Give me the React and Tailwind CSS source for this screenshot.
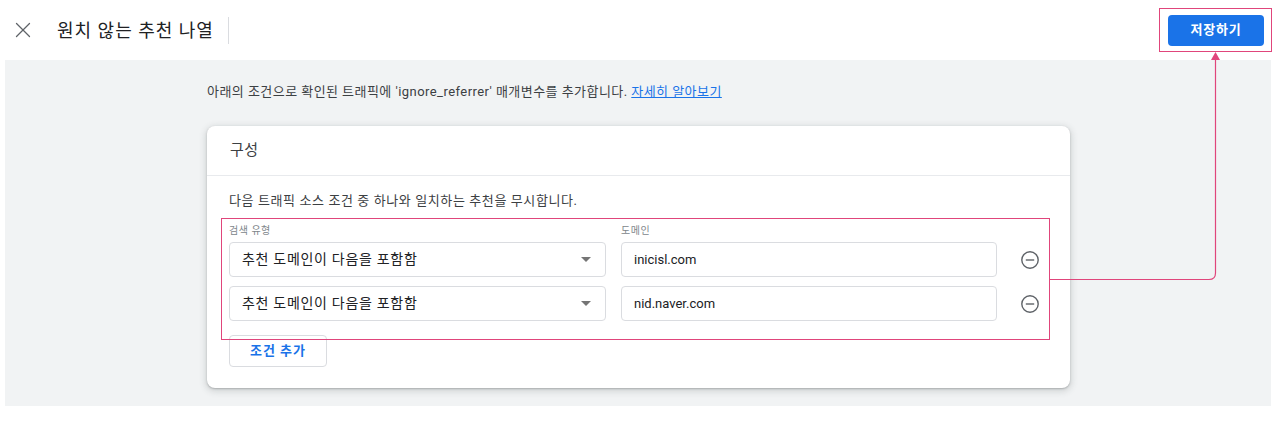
import { X } from 'lucide-react'

const font = { fontFamily: 'Roboto, "Noto Sans CJK KR", sans-serif' }

function SelectBox({ value }) {
  return (
    <div className="flex h-[35px] w-[377px] items-center justify-between rounded-[4px] border border-[#dadce0] bg-white pl-[12px] pr-[14px]">
      <span className="text-[14px] tracking-[0.7px] text-[#202124]">{value}</span>
      <span className="h-0 w-0 border-x-[5px] border-t-[5px] border-x-transparent border-t-[#757575]" />
    </div>
  )
}

function MinusCircle() {
  return (
    <svg width="20" height="20" viewBox="0 0 20 20" className="text-[#5f6368]">
      <circle cx="10" cy="10" r="8.2" fill="none" stroke="currentColor" strokeWidth="1.4" />
      <line x1="5.8" y1="10" x2="14.2" y2="10" stroke="currentColor" strokeWidth="1.4" />
    </svg>
  )
}

function ConditionRow({ domain }) {
  return (
    <div className="flex items-center">
      <SelectBox value="추천 도메인이 다음을 포함함" />
      <div className="ml-[15px] flex h-[35px] w-[376px] items-center rounded-[4px] border border-[#dadce0] bg-white px-[12px]">
        <span className="text-[13px] text-[#202124]">{domain}</span>
      </div>
      <button className="ml-[23px] flex h-[20px] w-[20px] items-center justify-center">
        <MinusCircle />
      </button>
    </div>
  )
}

export default function App() {
  return (
    <div className="relative h-[422px] w-[1280px] overflow-hidden bg-white" style={font}>
      {/* top bar */}
      <div className="flex h-[60px] items-center">
        <X className="ml-[10px] h-[26px] w-[26px] text-[#5f6368]" strokeWidth={1.2} />
        <h1 className="ml-[21px] text-[18px] tracking-[1px] text-[#202124]">원치 않는 추천 나열</h1>
        <div className="ml-[14px] h-[27px] w-px bg-[#dadce0]" />
        <div className="flex-1" />
        <button className="mr-[16px] flex h-[31px] w-[96px] items-center justify-center rounded-[4px] bg-[#1a73e8] text-[13px] font-bold tracking-[0.8px] text-white">
          저장하기
        </button>
      </div>

      {/* content area */}
      <div className="ml-[5px] mr-[9px] h-[346px] bg-[#f1f3f4] pl-[202px] pt-[22px]">
        <p className="text-[13px] leading-[20px] tracking-[0.45px] text-[#3c4043]">
          아래의 조건으로 확인된 트래픽에 'ignore_referrer' 매개변수를 추가합니다.{' '}
          <a className="text-[#1a73e8] underline">자세히 알아보기</a>
        </p>

        <div className="mt-[24px] w-[863px] rounded-[8px] bg-white shadow-[0_1px_2px_rgba(60,64,67,0.3),0_2px_6px_2px_rgba(60,64,67,0.15)]">
          <div className="flex h-[50px] items-center border-b border-[#e8eaed] px-[23px]">
            <h2 className="text-[15px] tracking-[0.5px] text-[#3c4043]">구성</h2>
          </div>
          <div className="px-[22px] pb-[21px] pt-[15px]">
            <p className="text-[13px] leading-[20px] tracking-[0.6px] text-[#3c4043]">
              다음 트래픽 소스 조건 중 하나와 일치하는 추천을 무시합니다.
            </p>
            <div className="mt-[12px] flex h-[14px] items-center text-[10px] tracking-[0.5px] text-[#80868b]">
              <span className="w-[392px]">검색 유형</span>
              <span>도메인</span>
            </div>
            <div className="mt-[5px] flex flex-col gap-[9px]">
              <ConditionRow domain="inicisl.com" />
              <ConditionRow domain="nid.naver.com" />
            </div>
            <button className="mt-[14px] flex h-[32px] w-[98px] items-center justify-center rounded-[4px] border border-[#dadce0] bg-white text-[13px] font-bold tracking-[1px] text-[#1a73e8]">
              조건 추가
            </button>
          </div>
        </div>
      </div>

      {/* annotations */}
      <div className="pointer-events-none absolute left-[1159px] top-[8px] h-[44px] w-[113px] border border-[#e0457b]" />
      <div className="pointer-events-none absolute left-[221px] top-[218px] h-[122px] w-[829px] border border-[#e0457b]" />
      <svg className="pointer-events-none absolute left-0 top-0" width="1280" height="422">
        <path d="M1049.5 279.5 H1209 Q1215.5 279.5 1215.5 273 V59" fill="none" stroke="#e0457b" strokeWidth="1.2" />
        <path d="M1215.5 52 L1211 60 L1220 60 Z" fill="#e0457b" />
      </svg>
    </div>
  )
}
